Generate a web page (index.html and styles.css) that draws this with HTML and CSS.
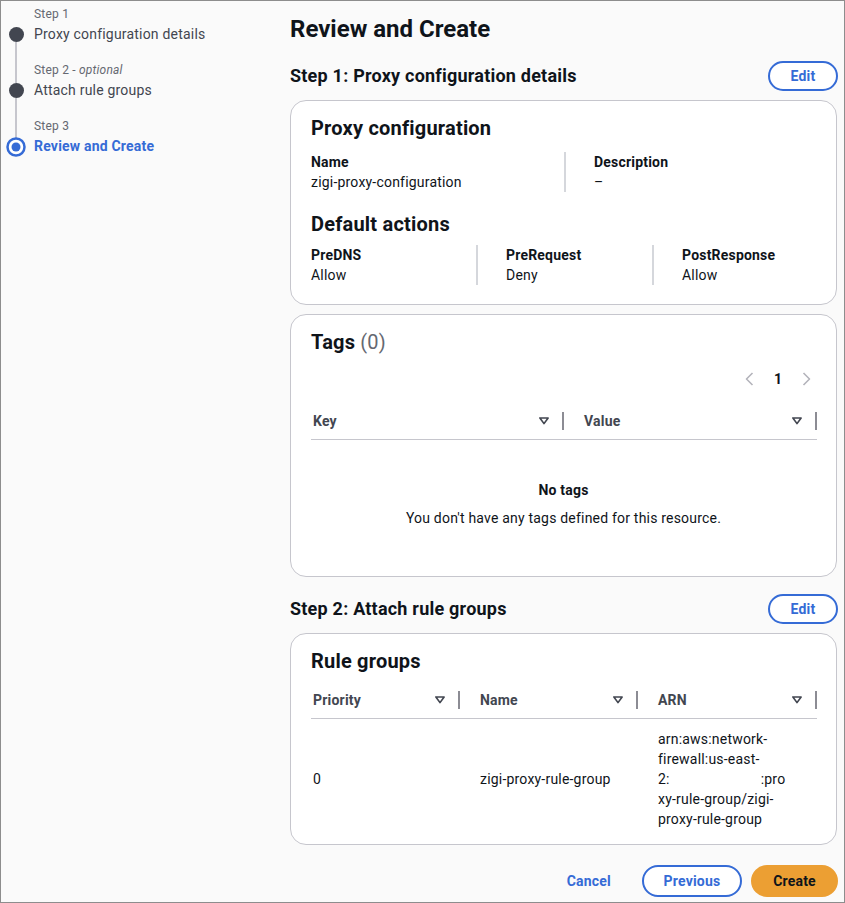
FILE: index.html
```html
<!DOCTYPE html>
<html lang="en">
<head>
<meta charset="utf-8">
<title>Review and Create</title>
<link rel="stylesheet" href="styles.css">
</head>
<body>
<div class="frame">
  <nav class="wizard-nav">
    <ol class="steps">
      <li class="step">
        <div class="rail"><span class="line top hidden"></span><span class="dot"></span><span class="line bottom"></span></div>
        <div class="step-text">
          <div class="step-label">Step 1</div>
          <div class="step-title">Proxy configuration details</div>
        </div>
      </li>
      <li class="step">
        <div class="rail"><span class="line top"></span><span class="dot"></span><span class="line bottom"></span></div>
        <div class="step-text">
          <div class="step-label">Step 2 - <i>optional</i></div>
          <div class="step-title">Attach rule groups</div>
        </div>
      </li>
      <li class="step active">
        <div class="rail"><span class="line top"></span>
          <svg class="dot-active" width="20" height="20" viewBox="0 0 20 20"><circle cx="10" cy="10" r="8.5" fill="#fff" stroke="currentColor" stroke-width="2.5"/><circle cx="10" cy="10" r="4.5" fill="currentColor"/></svg>
          <span class="line bottom hidden"></span></div>
        <div class="step-text">
          <div class="step-label">Step 3</div>
          <div class="step-title">Review and Create</div>
        </div>
      </li>
    </ol>
  </nav>

  <main class="content">
    <h1 class="page-title">Review and Create</h1>

    <section class="review-section">
      <div class="section-head">
        <h2 class="section-title">Step 1: Proxy configuration details</h2>
        <button class="btn btn-normal btn-edit">Edit</button>
      </div>

      <div class="card">
        <h3 class="card-title">Proxy configuration</h3>
        <div class="kv kv-2">
          <div class="kv-item">
            <div class="kv-label">Name</div>
            <div class="kv-value">zigi-proxy-configuration</div>
          </div>
          <div class="kv-item divided">
            <div class="kv-label">Description</div>
            <div class="kv-value">–</div>
          </div>
        </div>
        <h3 class="card-title sub">Default actions</h3>
        <div class="kv kv-3">
          <div class="kv-item">
            <div class="kv-label">PreDNS</div>
            <div class="kv-value">Allow</div>
          </div>
          <div class="kv-item divided">
            <div class="kv-label">PreRequest</div>
            <div class="kv-value">Deny</div>
          </div>
          <div class="kv-item divided">
            <div class="kv-label">PostResponse</div>
            <div class="kv-value">Allow</div>
          </div>
        </div>
      </div>

      <div class="card card-tags">
        <h3 class="card-title">Tags <span class="counter">(0)</span></h3>
        <div class="pager">
          <span class="pager-btn"><svg width="16" height="16" viewBox="0 0 16 16"><path d="M10.5 2 4.5 8l6 6" fill="none" stroke="#b4b4bb" stroke-width="1.6" stroke-linejoin="round"/></svg></span>
          <span class="pager-num">1</span>
          <span class="pager-btn"><svg width="16" height="16" viewBox="0 0 16 16"><path d="M5.5 2l6 6-6 6" fill="none" stroke="#b4b4bb" stroke-width="1.6" stroke-linejoin="round"/></svg></span>
        </div>
        <div class="table tags-table">
          <div class="th first"><span>Key</span><svg class="sort" width="12" height="12" viewBox="0 0 16 16"><path d="M2.5 4h11L8 11.5z" fill="none" stroke="#424650" stroke-width="2.2" stroke-linejoin="round"/></svg><span class="col-div"></span></div>
          <div class="th"><span>Value</span><svg class="sort" width="12" height="12" viewBox="0 0 16 16"><path d="M2.5 4h11L8 11.5z" fill="none" stroke="#424650" stroke-width="2.2" stroke-linejoin="round"/></svg><span class="col-div"></span></div>
        </div>
        <div class="empty">
          <div class="empty-title">No tags</div>
          <div class="empty-desc">You don't have any tags defined for this resource.</div>
        </div>
      </div>
    </section>

    <section class="review-section second">
      <div class="section-head">
        <h2 class="section-title">Step 2: Attach rule groups</h2>
        <button class="btn btn-normal btn-edit">Edit</button>
      </div>

      <div class="card card-rules">
        <h3 class="card-title">Rule groups</h3>
        <div class="table rules-table">
          <div class="th first"><span>Priority</span><svg class="sort" width="12" height="12" viewBox="0 0 16 16"><path d="M2.5 4h11L8 11.5z" fill="none" stroke="#424650" stroke-width="2.2" stroke-linejoin="round"/></svg><span class="col-div"></span></div>
          <div class="th"><span>Name</span><svg class="sort" width="12" height="12" viewBox="0 0 16 16"><path d="M2.5 4h11L8 11.5z" fill="none" stroke="#424650" stroke-width="2.2" stroke-linejoin="round"/></svg><span class="col-div"></span></div>
          <div class="th"><span>ARN</span><svg class="sort" width="12" height="12" viewBox="0 0 16 16"><path d="M2.5 4h11L8 11.5z" fill="none" stroke="#424650" stroke-width="2.2" stroke-linejoin="round"/></svg><span class="col-div"></span></div>

          <div class="td first">0</div>
          <div class="td">zigi-proxy-rule-group</div>
          <div class="td arn">
            <span class="ln">arn:aws:network-</span>
            <span class="ln">firewall:us-east-</span>
            <span class="ln">2:<span class="redact"></span>:pro</span>
            <span class="ln">xy-rule-group/zigi-</span>
            <span class="ln">proxy-rule-group</span>
          </div>
        </div>
      </div>
    </section>

    <footer class="actions">
      <button class="btn btn-link">Cancel</button>
      <button class="btn btn-normal btn-prev">Previous</button>
      <button class="btn btn-primary">Create</button>
    </footer>
  </main>
</div>
</body>
</html>
```

FILE: styles.css
```css
* { box-sizing: border-box; }

html, body {
  margin: 0;
  padding: 0;
}

body {
  font-family: Roboto, "Noto Sans", "Liberation Sans", sans-serif;
  font-size: 14px;
  line-height: 20px;
  letter-spacing: 0.2px;
  color: #0f141a;
  background: #fafafa;
}

.frame {
  width: 845px;
  height: 903px;
  border: 1px solid #8d8d8d;
  display: flex;
  background: #fafafa;
  overflow: hidden;
}

/* ---------- wizard navigation ---------- */
.wizard-nav {
  width: 289px;
  padding: 5px 0 0 7px;
  flex: none;
}

.steps {
  list-style: none;
  margin: 0;
  padding: 0;
}

.step {
  display: flex;
  gap: 10px;
}

.rail {
  width: 16px;
  display: flex;
  flex-direction: column;
  align-items: center;
  flex: none;
}

.line {
  width: 2px;
  background: #c6c6cd;
}

.line.top { height: 21px; }
.line.bottom { flex: 1; }
.line.hidden { background: transparent; }

.dot {
  width: 15px;
  height: 15px;
  border-radius: 50%;
  background: #424650;
  flex: none;
}

.dot-active {
  color: #356bd6;
  margin: -2px 0;
  flex: none;
}

.step-text {
  padding-bottom: 16px;
}

.step-label {
  font-size: 12px;
  line-height: 16px;
  color: #656871;
}

.step-label i {
  font-style: italic;
}

.step-title {
  font-size: 14px;
  line-height: 24px;
  color: #424650;
}

.step.active .step-title {
  color: #356bd6;
  font-weight: 700;
}

/* ---------- main content ---------- */
.content {
  width: 548px;
  padding-top: 13px;
  display: flex;
  flex-direction: column;
}

.page-title {
  margin: 0;
  font-size: 24px;
  line-height: 30px;
  font-weight: 700;
  letter-spacing: 0;
  color: #0f141a;
}

.review-section {
  margin-top: 17px;
  display: flex;
  flex-direction: column;
}

.review-section.second {
  margin-top: 17px;
}

.section-head {
  display: flex;
  align-items: center;
  justify-content: space-between;
  height: 30px;
  margin-bottom: 9px;
}

.section-title {
  margin: 0;
  font-size: 18px;
  line-height: 22px;
  font-weight: 700;
  letter-spacing: 0.22px;
}

.btn {
  font-family: inherit;
  font-size: 14px;
  font-weight: 700;
  line-height: 20px;
  letter-spacing: 0.2px;
  border-radius: 20px;
  cursor: pointer;
  background: transparent;
  border: 2px solid transparent;
  padding: 0;
}

.btn-normal {
  border-color: #356bd6;
  color: #356bd6;
  background: #fff;
}

.btn-edit {
  width: 70px;
  height: 30px;
}

.btn-link {
  color: #356bd6;
  padding: 0 20px;
  height: 32px;
}

.btn-prev {
  width: 100px;
  height: 32px;
}

.btn-primary {
  width: 87px;
  height: 32px;
  background: #ec9f33;
  border-color: #ec9f33;
  color: #0f141a;
}

/* ---------- cards ---------- */
.card {
  background: #fff;
  border: 1px solid #c6c6cd;
  border-radius: 16px;
  padding: 15px 20px 19px;
  width: 547px;
}

.card + .card {
  margin-top: 9px;
}

.card-title {
  margin: 0;
  font-size: 20px;
  line-height: 24px;
  font-weight: 700;
}

.card-title.sub {
  margin-top: 20px;
}

.counter {
  font-weight: 400;
  color: #656871;
}

.kv {
  display: grid;
}

.kv-2 {
  grid-template-columns: 253px 1fr;
  margin-top: 12px;
}

.kv-3 {
  grid-template-columns: 165px 176px 1fr;
  margin-top: 9px;
}

.kv-item.divided {
  border-left: 2px solid #d5d7dc;
  padding-left: 28px;
}

.kv-label {
  font-weight: 700;
}

/* ---------- pager ---------- */
.pager {
  display: flex;
  justify-content: flex-end;
  align-items: center;
  gap: 8px;
  margin-top: 13px;
  height: 24px;
  padding-right: 2px;
}

.pager-btn {
  width: 16px;
  height: 16px;
  display: flex;
}

.pager-num {
  min-width: 24px;
  text-align: center;
  font-weight: 700;
}

/* ---------- tables ---------- */
.table {
  display: grid;
}

.tags-table {
  grid-template-columns: 253px 253px;
  margin-top: 12px;
}

.rules-table {
  grid-template-columns: 149px 178px 179px;
  margin-top: 9px;
}

.th {
  display: flex;
  align-items: center;
  height: 37px;
  padding-left: 20px;
  font-weight: 700;
  color: #424650;
  border-bottom: 1px solid #c6c6cd;
}

.th.first,
.td.first {
  padding-left: 2px;
}

.sort {
  margin-left: auto;
  flex: none;
}

.col-div {
  width: 2px;
  height: 18px;
  margin-left: 12px;
  background: #8c8c94;
  flex: none;
}

.td {
  padding: 10px 20px;
  display: flex;
  align-items: center;
}

.td.arn {
  flex-direction: column;
  align-items: flex-start;
}

.ln {
  display: block;
  white-space: nowrap;
}

.redact {
  display: inline-block;
  width: 91px;
  height: 20px;
  vertical-align: top;
}

.card-rules {
  padding-bottom: 5px;
}

/* ---------- empty state ---------- */
.empty {
  padding: 40px 0 29px;
  text-align: center;
}

.empty-title {
  font-weight: 700;
}

.empty-desc {
  margin-top: 8px;
}

/* ---------- footer ---------- */
.actions {
  margin-top: 20px;
  display: flex;
  justify-content: flex-end;
  align-items: center;
  gap: 9px;
}
```
